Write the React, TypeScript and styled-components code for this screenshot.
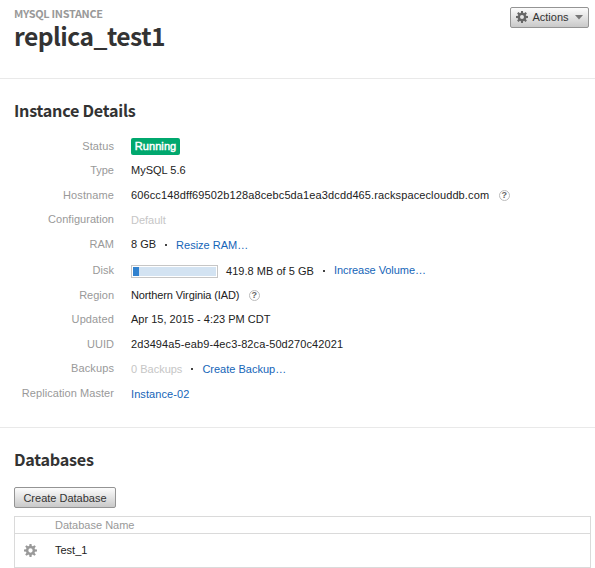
import React from "react";
import styled, { createGlobalStyle } from "styled-components";

const GlobalStyle = createGlobalStyle`
  * { box-sizing: border-box; }
  body {
    margin: 0;
    overflow: hidden;
    background: #fff;
    color: #222;
    font: 11px/16px "Liberation Sans", Helvetica, Arial, sans-serif;
  }
`;

const Page = styled.main`
  width: 595px;
  height: 568px;
`;

const Header = styled.header`
  display: flex;
  justify-content: space-between;
  align-items: flex-start;
  height: 79px;
  padding: 7px 6px 0 14px;
  border-bottom: 1px solid #e9e9e9;
`;

const headingFont = `"Noto Sans CJK SC", "Noto Sans", sans-serif`;

const Eyebrow = styled.div`
  height: 13px;
  font: 700 10.9px/13px ${headingFont};
  letter-spacing: -0.3px;
  color: #999;
  white-space: nowrap;
`;

const Title = styled.h1`
  margin: 0;
  font: 700 24.6px/30px ${headingFont};
  letter-spacing: -0.5px;
  color: #333;
`;

const SectionTitle = styled.h2`
  margin: 0;
  font: 700 16.2px/24px ${headingFont};
  letter-spacing: -0.26px;
  color: #333;
`;

const Button = styled.button<{ $width: number; $raised?: boolean }>`
  display: flex;
  align-items: center;
  justify-content: center;
  width: ${(p) => p.$width}px;
  height: 21px;
  padding: ${(p) => (p.$raised ? "0 0 1px" : "1px 0 0")};
  border: 1px solid #949494;
  border-radius: 2px;
  background: linear-gradient(#fcfcfc, #c9c9c9);
  color: #333;
  font: 11px/16px "Liberation Sans", Helvetica, Arial, sans-serif;
  white-space: nowrap;
`;

const ButtonLabel = styled.span`
  margin: 0 6px 0 4px;
`;

const Details = styled.section`
  height: 349px;
  padding: 19px 0 0 14px;
  border-bottom: 1px solid #e9e9e9;
`;

const DetailList = styled.dl`
  margin: 16px 0 0;
`;

const Row = styled.div<{ $height: number }>`
  display: grid;
  grid-template-columns: 100px 1fr;
  column-gap: 17px;
  align-items: start;
  height: ${(p) => p.$height}px;
`;

const Label = styled.dt<{ $spacing?: number }>`
  text-align: right;
  color: #999;
  letter-spacing: ${(p) => p.$spacing ?? 0}px;
  white-space: nowrap;
`;

const Value = styled.dd`
  display: flex;
  align-items: flex-start;
  margin: 0;
  white-space: nowrap;
`;

const Text = styled.span<{ $spacing?: number; $muted?: boolean; $drop?: number }>`
  letter-spacing: ${(p) => p.$spacing ?? 0}px;
  color: ${(p) => (p.$muted ? "#c6c6c6" : "#222")};
  padding-top: ${(p) => p.$drop ?? 0}px;
`;

const Link = styled.a<{ $spacing?: number; $drop?: number }>`
  letter-spacing: ${(p) => p.$spacing ?? 0}px;
  padding-top: ${(p) => p.$drop ?? 0}px;
  color: #1565b8;
  text-decoration: none;
`;

const Dot = styled.span`
  flex: none;
  width: 2px;
  height: 2px;
  margin: 8px 9px 0;
  background: #444;
`;

const Badge = styled.span`
  width: 49px;
  height: 17px;
  border-radius: 2px;
  background: #00a86e;
  color: #fff;
  line-height: 17px;
  text-align: center;
  letter-spacing: 0.1px;
  -webkit-text-stroke: 0.45px #fff;
`;

const Meter = styled.span`
  width: 87px;
  height: 13px;
  margin: 3px 8px 0 0;
  padding: 1px;
  border: 1px solid #c6c6c6;
`;

const MeterTrack = styled.span`
  display: block;
  height: 9px;
  background: #d3e3f2;
`;

const MeterFill = styled.span`
  display: block;
  height: 100%;
  background: #3182cf;
`;

const HelpIcon = styled.span`
  display: inline-flex;
  align-items: center;
  justify-content: center;
  width: 11px;
  height: 11px;
  margin: 3px 0 0 9.5px;
  border: 1px solid #bbb;
  border-radius: 50%;
  color: #666;
  font-size: 9px;
  font-weight: 700;
  line-height: 9px;
`;

const Databases = styled.section`
  padding: 19px 4px 0 14px;
`;

const Toolbar = styled.div`
  margin: 16px 0 8px;
`;

const Table = styled.div`
  border: 1px solid #dadada;
`;

const TableRow = styled.div<{ $head?: boolean }>`
  display: grid;
  grid-template-columns: 40px 1fr;
  align-items: center;
  height: ${(p) => (p.$head ? 17 : 33)}px;
  border-bottom: ${(p) => (p.$head ? "1px solid #dadada" : "0")};
  color: ${(p) => (p.$head ? "#999" : "#222")};
`;

const Cell = styled.span`
  padding-bottom: 1px;
`;

const GearCell = styled.span`
  display: flex;
  padding-left: 9px;
`;

function Gear({ size, color }: { size: number; color: string }) {
  return (
    <svg width={size} height={size} viewBox="0 0 26 26">
      <g fill={color}>
        {[0, 45, 90, 135, 180, 225, 270, 315].map((angle) => (
          <path key={angle} d="M10.4 5 11 0h4l.6 5z" transform={`rotate(${angle} 13 13)`} />
        ))}
      </g>
      <circle cx="13" cy="13" r="6.8" fill="none" stroke={color} strokeWidth="5" />
    </svg>
  );
}

const diskPercent = 7.23;

export default function App() {
  return (
    <Page>
      <GlobalStyle />
      <Header>
        <div>
          <Eyebrow>MYSQL INSTANCE</Eyebrow>
          <Title>replica_test1</Title>
        </div>
        <Button $width={79} $raised>
          <Gear size={12} color="#666" />
          <ButtonLabel>Actions</ButtonLabel>
          <svg width="8" height="5" viewBox="0 0 8 5">
            <path d="M0 0h8L4 4.5z" fill="#777" />
          </svg>
        </Button>
      </Header>
      <Details>
        <SectionTitle>Instance Details</SectionTitle>
        <DetailList>
          <Row $height={24}>
            <Label $spacing={0.1}>Status</Label>
            <Value><Badge>Running</Badge></Value>
          </Row>
          <Row $height={25}>
            <Label>Type</Label>
            <Value><Text>MySQL 5.6</Text></Value>
          </Row>
          <Row $height={24}>
            <Label $spacing={0.1}>Hostname</Label>
            <Value>
              <Text $spacing={0.12}>606cc148dff69502b128a8cebc5da1ea3dcdd465.rackspaceclouddb.com</Text>
              <HelpIcon>?</HelpIcon>
            </Value>
          </Row>
          <Row $height={25}>
            <Label $spacing={0.04}>Configuration</Label>
            <Value><Text $muted $drop={1}>Default</Text></Value>
          </Row>
          <Row $height={26}>
            <Label>RAM</Label>
            <Value>
              <Text>8 GB</Text><Dot /><Link $drop={1}>Resize RAM…</Link>
            </Value>
          </Row>
          <Row $height={25}>
            <Label>Disk</Label>
            <Value>
              <Meter>
                <MeterTrack>
                  <MeterFill style={{ width: `${diskPercent}%` }} />
                </MeterTrack>
              </Meter>
              <Text $drop={1} $spacing={0.03}>419.8 MB of 5 GB</Text><Dot /><Link $spacing={-0.06}>Increase Volume…</Link>
            </Value>
          </Row>
          <Row $height={24}>
            <Label>Region</Label>
            <Value><Text $spacing={-0.12}>Northern Virginia (IAD)</Text><HelpIcon>?</HelpIcon></Value>
          </Row>
          <Row $height={25}>
            <Label $spacing={0.12}>Updated</Label>
            <Value><Text>Apr 15, 2015 - 4:23 PM CDT</Text></Value>
          </Row>
          <Row $height={24}>
            <Label>UUID</Label>
            <Value><Text $spacing={0.1}>2d3494a5-eab9-4ec3-82ca-50d270c42021</Text></Value>
          </Row>
          <Row $height={25}>
            <Label $spacing={0.12}>Backups</Label>
            <Value>
              <Text $muted $drop={1}>0 Backups</Text><Dot /><Link $drop={1}>Create Backup…</Link>
            </Value>
          </Row>
          <Row $height={25}>
            <Label $spacing={0.06}>Replication Master</Label>
            <Value><Link $drop={1} $spacing={0.08}>Instance-02</Link></Value>
          </Row>
        </DetailList>
      </Details>
      <Databases>
        <SectionTitle>Databases</SectionTitle>
        <Toolbar>
          <Button $width={102}>Create Database</Button>
        </Toolbar>
        <Table>
          <TableRow $head>
            <span />
            <span>Database Name</span>
          </TableRow>
          <TableRow>
            <GearCell><Gear size={13} color="#999" /></GearCell>
            <Cell>Test_1</Cell>
          </TableRow>
        </Table>
      </Databases>
    </Page>
  );
}
